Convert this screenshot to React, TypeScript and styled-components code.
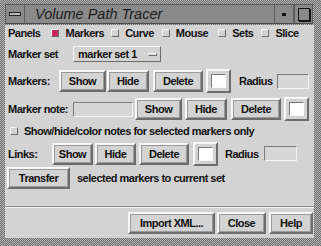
import styled, { createGlobalStyle } from 'styled-components';

const Global = createGlobalStyle`
  html, body {
    margin: 0;
    padding: 0;
    background: #8c8c8c;
  }
  * {
    box-sizing: border-box;
  }
`;

const Window = styled.div`
  width: 321px;
  height: 246px;
  padding: 4px 7px 8px 5px;
  display: flex;
  flex-direction: column;
  background-color: #a2a2a2;
  background-image: repeating-conic-gradient(#6e6e6e 0 25%, #b4b4b4 0 50%);
  background-size: 2px 2px;
  font-family: 'Liberation Sans', Arial, sans-serif;
  color: #111;
`;

const TitleBar = styled.div`
  height: 20px;
  display: flex;
  align-items: stretch;
  background: #8a8a8a;
  border-top: 1px solid #5a5a5a;
  border-bottom: 1px solid #4a4a4a;
  margin-right: 1px;
`;

const TitleButton = styled.div<{ $w: number }>`
  width: ${(p) => p.$w}px;
  display: flex;
  align-items: center;
  justify-content: center;
  border-left: 1px solid #5e5e5e;
  border-right: 1px solid #5e5e5e;
`;

const Dash = styled.div`
  width: 12px;
  height: 4px;
  background: #b8b8b8;
  border: 1px solid #222;
`;

const Dot = styled.div`
  width: 4px;
  height: 3px;
  background: #111;
`;

const Square = styled.div`
  width: 12px;
  height: 13px;
  border: 1px solid #111;
  box-shadow: 1px 1px 0 #111;
`;

const Title = styled.div`
  flex: 1;
  padding-left: 10px;
  font-style: italic;
  font-size: 14.5px;
  line-height: 18px;
  color: #1c1c1c;
`;

const Body = styled.div`
  flex: 1;
  margin-top: 1px;
  background: #d3d3d3;
  display: flex;
  flex-direction: column;
  padding: 1px 1px 4px 3px;
  font-size: 11px;
  font-weight: bold;
  letter-spacing: -0.5px;
`;

const Row = styled.div<{ $h: number; $mt: number }>`
  height: ${(p) => p.$h}px;
  margin-top: ${(p) => p.$mt}px;
  display: flex;
  align-items: center;
  white-space: nowrap;
`;

const Label = styled.span<{ $w?: number }>`
  display: inline-block;
  width: ${(p) => (p.$w ? `${p.$w}px` : 'auto')};
  flex-shrink: 0;
`;

const Check = styled.span<{ $on?: boolean; $ml: number }>`
  width: 8px;
  height: 8px;
  margin-left: ${(p) => p.$ml}px;
  margin-right: 6px;
  flex-shrink: 0;
  background: ${(p) => (p.$on ? '#c4285a' : '#d3d3d3')};
  border: 1px solid;
  border-color: #f4f4f4 #6a6a6a #6a6a6a #f4f4f4;
`;

const Button = styled.div<{ $w: number; $ml?: number; $h?: number }>`
  width: ${(p) => p.$w}px;
  height: ${(p) => p.$h ?? 22}px;
  margin-left: ${(p) => p.$ml ?? 0}px;
  flex-shrink: 0;
  display: flex;
  align-items: center;
  justify-content: center;
  background: #d3d3d3;
  border: 2px solid;
  border-color: #f8f8f8 #6c6c6c #6c6c6c #f8f8f8;
  outline: 1px solid #9a9a9a;
  outline-offset: -3px;
`;

const Swatch = styled.div<{ $ml: number }>`
  width: 25px;
  height: 24px;
  margin-left: ${(p) => p.$ml}px;
  flex-shrink: 0;
  padding: 3px;
  background: #d3d3d3;
  border: 2px solid;
  border-color: #f8f8f8 #6c6c6c #6c6c6c #f8f8f8;
`;

const SwatchInner = styled.div`
  width: 100%;
  height: 100%;
  background: #fff;
  border: 1px solid;
  border-color: #7a7a7a #fafafa #fafafa #7a7a7a;
`;

const Field = styled.div<{ $w: number; $ml: number }>`
  width: ${(p) => p.$w}px;
  height: 15px;
  margin-left: ${(p) => p.$ml}px;
  flex-shrink: 0;
  background: #d6d6d6;
  border: 1px solid;
  border-color: #7c7c7c #f4f4f4 #f4f4f4 #7c7c7c;
`;

const Menu = styled.div`
  width: 88px;
  height: 16px;
  margin-left: 7px;
  display: flex;
  align-items: center;
  padding-left: 4px;
  border: 1px solid;
  border-color: #f8f8f8 #6c6c6c #6c6c6c #f8f8f8;
`;

const MenuDash = styled.span`
  width: 9px;
  height: 3px;
  margin-left: auto;
  margin-right: 3px;
  border: 1px solid;
  border-color: #f8f8f8 #6c6c6c #6c6c6c #f8f8f8;
`;

const Plain = styled.span<{ $ml: number }>`
  margin-left: ${(p) => p.$ml}px;
`;

const Spacer = styled.div`
  flex: 1;
`;

const Separator = styled.div`
  height: 2px;
  margin-left: -3px;
  margin-right: -1px;
  border-top: 1px solid #8a8a8a;
  border-bottom: 1px solid #f4f4f4;
`;

const Footer = styled.div`
  margin-top: 4px;
  display: flex;
  justify-content: flex-end;
  align-items: center;
`;

const panels = [
  { name: 'Markers', on: true, ml: 11 },
  { name: 'Curve', on: false, ml: 7 },
  { name: 'Mouse', on: false, ml: 8 },
  { name: 'Sets', on: false, ml: 10 },
  { name: 'Slice', on: false, ml: 8 },
];

const App = () => {
  return (
    <>
      <Global />
      <Window>
        <TitleBar>
          <TitleButton $w={20}>
            <Dash />
          </TitleButton>
          <Title>Volume Path Tracer</Title>
          <TitleButton $w={20}>
            <Dot />
          </TitleButton>
          <TitleButton $w={19}>
            <Square />
          </TitleButton>
        </TitleBar>
        <Body>
          <Row $h={14} $mt={0}>
            <Label>Panels</Label>
            {panels.map((p) => (
              <span key={p.name} style={{ display: 'contents' }}>
                <Check $on={p.on} $ml={p.ml} />
                <Label>{p.name}</Label>
              </span>
            ))}
          </Row>
          <Row $h={16} $mt={6}>
            <Label $w={58}>Marker set</Label>
            <Menu>
              marker set 1
              <MenuDash />
            </Menu>
          </Row>
          <Row $h={24} $mt={7}>
            <Label $w={51}>Markers:</Label>
            <Button $w={47}>Show</Button>
            <Button $w={42} $ml={1}>Hide</Button>
            <Button $w={50} $ml={4}>Delete</Button>
            <Swatch $ml={3}>
              <SwatchInner />
            </Swatch>
            <Plain $ml={8}>Radius</Plain>
            <Field $w={32} $ml={4} />
          </Row>
          <Row $h={24} $mt={4}>
            <Label>Marker note:</Label>
            <Field $w={60} $ml={5} />
            <Button $w={47} $ml={2}>Show</Button>
            <Button $w={42} $ml={3}>Hide</Button>
            <Button $w={50} $ml={4}>Delete</Button>
            <Swatch $ml={3}>
              <SwatchInner />
            </Swatch>
          </Row>
          <Row $h={14} $mt={3}>
            <Check $ml={2} />
            <Label>Show/hide/color notes for selected markers only</Label>
          </Row>
          <Row $h={25} $mt={3}>
            <Label $w={44}>Links:</Label>
            <Button $w={41}>Show</Button>
            <Button $w={41} $ml={2}>Hide</Button>
            <Button $w={50} $ml={3}>Delete</Button>
            <Swatch $ml={4}>
              <SwatchInner />
            </Swatch>
            <Plain $ml={7}>Radius</Plain>
            <Field $w={33} $ml={5} />
          </Row>
          <Row $h={22} $mt={1}>
            <Button $w={63} $ml={-1}>Transfer</Button>
            <Plain $ml={7}>selected markers to current set</Plain>
          </Row>
          <Spacer />
          <Separator />
          <Footer>
            <Button $w={87}>Import XML...</Button>
            <Button $w={49} $ml={2}>Close</Button>
            <Button $w={44} $ml={3}>Help</Button>
          </Footer>
        </Body>
      </Window>
    </>
  );
};

export default App;
